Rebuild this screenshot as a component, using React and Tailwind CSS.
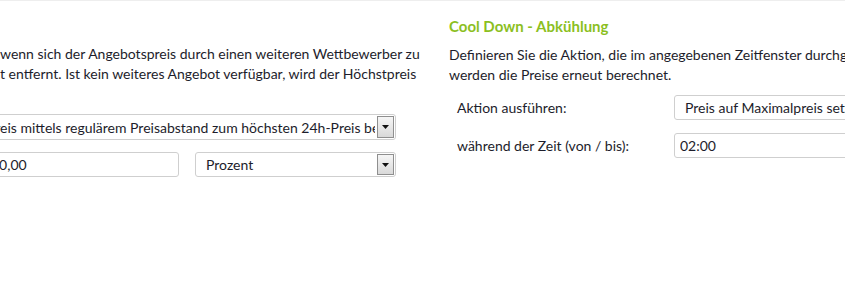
import React from 'react';

const SelectArrow = () => (
  <span className="absolute right-[1px] top-[1px] bottom-[1px] w-[17px] border border-[#8f8f8f] bg-gradient-to-b from-[#f6f6f6] to-[#d9d9d9] flex items-center justify-center">
    <svg width="7" height="4" viewBox="0 0 7 4">
      <path d="M0 0h7L3.5 4z" fill="#111" />
    </svg>
  </span>
);

const Field = ({ className = '', children, arrow = false }) => (
  <div className={`relative h-[25px] rounded-[3px] border border-[#cfcfcf] bg-white flex items-center whitespace-nowrap text-[14px] text-[#1d1d2b] ${arrow ? 'pr-[20px]' : ''} ${className}`}>
    <span className="flex-1 min-w-0 overflow-hidden">{children}</span>
    {arrow && <SelectArrow />}
  </div>
);

export default function App() {
  return (
    <div className="w-[845px] h-[296px] overflow-hidden bg-white border-t border-[#eeeeee] font-['Lato','Liberation_Sans',sans-serif] text-[14px] text-[#1d1d2b]">
      <div className="flex">
        <div className="w-[396px] shrink-0 pt-[43px]">
          <p className="leading-[20px] whitespace-nowrap">wenn sich der Angebotspreis durch einen weiteren Wettbewerber zu</p>
          <p className="leading-[20px] whitespace-nowrap">t entfernt. Ist kein weiteres Angebot verfügbar, wird der Höchstpreis</p>
          <Field arrow className="mt-[30px] -ml-[30px] h-[26px] pl-[16px]">
            Preis mittels regulärem Preisabstand zum höchsten 24h-Preis berechnen
          </Field>
          <div className="mt-[12px] flex gap-[16px]">
            <Field className="-ml-[30px] w-[209px] pl-[20px]">10,00</Field>
            <Field arrow className="flex-1 pl-[10px]">Prozent</Field>
          </div>
        </div>
        <div className="ml-[53px] pt-[15px] flex-1 min-w-0">
          <h3 className="text-[15px] leading-[20px] font-bold text-[#8cbf1f]">Cool Down - Abkühlung</h3>
          <p className="mt-[9px] leading-[20px] whitespace-nowrap">Definieren Sie die Aktion, die im angegebenen Zeitfenster durchgeführt werden soll. Danach</p>
          <p className="leading-[20px]">werden die Preise erneut berechnet.</p>
          <div className="mt-[10px] flex flex-col gap-[13px] pl-[8px]">
            <div className="flex items-center">
              <span className="w-[217px] shrink-0">Aktion ausführen:</span>
              <Field className="w-[300px] pl-[10px] shrink-0">Preis auf Maximalpreis setzen</Field>
            </div>
            <div className="flex items-center">
              <span className="w-[217px] shrink-0">während der Zeit (von / bis):</span>
              <Field className="w-[300px] pl-[5px] shrink-0">02:00</Field>
            </div>
          </div>
        </div>
      </div>
    </div>
  );
}
